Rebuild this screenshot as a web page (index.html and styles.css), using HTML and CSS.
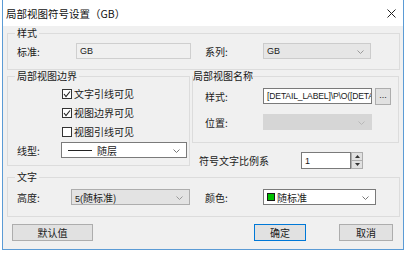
FILE: index.html
```html
<!DOCTYPE html>
<html lang="zh-CN">
<head>
  <meta charset="UTF-8" />
  <title>局部视图符号设置（GB）</title>
  <link rel="stylesheet" href="styles.css">
</head>
<body>
  <div class="dialog">
    <div class="titlebar">
      <span class="title">局部视图符号设置（GB）</span>
      <svg class="close" width="9" height="9" viewBox="0 0 9 9">
        <path d="M0.5 0.5 L8.5 8.5 M8.5 0.5 L0.5 8.5" stroke="#222" stroke-width="1" fill="none"/>
      </svg>
    </div>

    <div class="body">
      <fieldset class="group group-style">
        <legend>样式</legend>
        <div class="row">
          <span class="lbl w59">标准:</span>
          <div class="field ro w115"><span class="latin">GB</span></div>
          <span class="lbl w58 gap14">系列:</span>
          <div class="combo dis w108">
            <span class="latin">GB</span>
            <svg class="chev" width="7" height="4"><polyline points="0.5,0.5 3.5,3.5 6.5,0.5" fill="none" stroke="#9a9a9a"/></svg>
          </div>
        </div>
      </fieldset>

      <div class="mid">
        <fieldset class="group group-border">
          <legend>局部视图边界</legend>
          <div class="check first">
            <span class="box"><svg width="8" height="8"><polyline points="1,4 3,6.5 7,1.5" fill="none" stroke="#222" stroke-width="1.1"/></svg></span>文字引线可见
          </div>
          <div class="check">
            <span class="box"><svg width="8" height="8"><polyline points="1,4 3,6.5 7,1.5" fill="none" stroke="#222" stroke-width="1.1"/></svg></span>视图边界可见
          </div>
          <div class="check">
            <span class="box"></span>视图引线可见
          </div>
          <div class="row linetype">
            <span class="lbl w44">线型:</span>
            <div class="combo w126">
              <span class="dash"></span><span>随层</span>
              <svg class="chev" width="7" height="4"><polyline points="0.5,0.5 3.5,3.5 6.5,0.5" fill="none" stroke="#777"/></svg>
            </div>
          </div>
        </fieldset>

        <div class="right-col">
          <fieldset class="group group-name">
            <legend>局部视图名称</legend>
            <div class="row r17 name-style">
              <span class="lbl w58">样式:</span>
              <div class="field w109"><span class="latin narrow">[DETAIL_LABEL]\P\O([DETA</span></div>
              <div class="btn dots">...</div>
            </div>
            <div class="row name-pos">
              <span class="lbl w58">位置:</span>
              <div class="combo off w109">
                <svg class="chev" width="7" height="4"><polyline points="0.5,0.5 3.5,3.5 6.5,0.5" fill="none" stroke="#b8b8b8"/></svg>
              </div>
            </div>
          </fieldset>
          <div class="row r17 scale">
            <span class="lbl w102">符号文字比例系</span>
            <div class="field w50"><span class="latin">1</span></div>
            <div class="spin">
              <div class="spin-btn"><svg width="5" height="3"><polygon points="0,3 2.5,0 5,3" fill="#333"/></svg></div>
              <div class="spin-btn"><svg width="5" height="3"><polygon points="0,0 2.5,3 5,0" fill="#333"/></svg></div>
            </div>
          </div>
        </div>
      </div>

      <fieldset class="group group-text">
        <legend>文字</legend>
        <div class="row">
          <span class="lbl w54">高度:</span>
          <div class="combo dis2 w119">
            <span><span class="latin">5(</span>随标准)</span>
            <svg class="chev" width="7" height="4"><polyline points="0.5,0.5 3.5,3.5 6.5,0.5" fill="none" stroke="#999"/></svg>
          </div>
          <span class="lbl w58 gap15">颜色:</span>
          <div class="combo w113">
            <span class="swatch"></span><span>随标准</span>
            <svg class="chev" width="7" height="4"><polyline points="0.5,0.5 3.5,3.5 6.5,0.5" fill="none" stroke="#777"/></svg>
          </div>
        </div>
      </fieldset>

      <div class="buttons">
        <div class="btn w81">默认值</div>
        <div class="btn w52 ok">确定</div>
        <div class="btn w54 cancel">取消</div>
      </div>
    </div>
  </div>
</body>
</html>
```

FILE: styles.css
```css
body {
  margin: 0;
  background: #fff;
  font-family: "Noto Sans CJK SC", "Liberation Sans", sans-serif;
  font-size: 10px;
  color: #1a1a1a;
}

.dialog {
  box-sizing: border-box;
  margin-left: 2px;
  width: 402px;
  height: 250px;
  border: 1px solid #5b9bd5;
  border-top: none;
}

.titlebar {
  height: 26px;
  display: flex;
  align-items: center;
  justify-content: space-between;
  padding: 0 7px 0 3px;
  background: #fff;
}

.title {
  font-size: 10.5px;
  color: #111;
}

.body {
  height: 223px;
  box-sizing: border-box;
  padding: 1px 3px 0 4px;
  background: #f0f0f0;
}

.group {
  margin: 0;
  border: 1px solid #dcdcdc;
  min-width: 0;
  box-sizing: border-box;
}

.group legend {
  line-height: 12px;
  padding: 0 2px;
  margin-left: -2px;
}

.group-style {
  padding: 0 4px 10px 9px;
}

.group-style .row {
  margin-top: 4px;
}

.row {
  display: flex;
  align-items: center;
  height: 16px;
}

.r17 {
  height: 17px;
  align-items: flex-start;
}

.r17 .lbl {
  line-height: 17px;
}

.lbl {
  flex: none;
  white-space: nowrap;
}

.latin {
  font-family: "Liberation Sans", sans-serif;
  font-size: 9px;
}

.latin.narrow {
  font-size: 8.6px;
  letter-spacing: -0.15px;
}

.w44 { width: 44px; }
.w50 { width: 50px; }
.w52 { width: 52px; }
.w54 { width: 54px; }
.w58 { width: 58px; }
.w59 { width: 59px; }
.w81 { width: 81px; }
.w102 { width: 102px; }
.w108 { width: 108px; }
.w109 { width: 109px; }
.w113 { width: 113px; }
.w115 { width: 115px; }
.w119 { width: 119px; }
.w126 { width: 126px; }
.gap14 { margin-left: 14px; }
.gap15 { margin-left: 15px; }

.field,
.combo {
  flex: none;
  box-sizing: border-box;
  height: 16px;
  border: 1px solid #7a7a7a;
  background: #fff;
  display: flex;
  align-items: center;
  padding-left: 3px;
  overflow: hidden;
  white-space: nowrap;
}

.field.ro {
  background: #f0f0f0;
  border-color: #cfcfcf;
}

.combo {
  position: relative;
  padding-right: 16px;
}

.combo .chev {
  position: absolute;
  right: 6px;
  top: 6px;
}

.combo.dis {
  background: #e6e6e6;
  border-color: #cccccc;
}

.combo.dis2 {
  background: #e3e3e3;
  border-color: #adadad;
}

.combo.off {
  background: #d6d6d6;
  border-color: #d6d6d6;
}

.mid {
  display: flex;
  align-items: flex-start;
}

.group-border {
  width: 183px;
  padding: 0 2px 7px 9px;
}

.check {
  display: flex;
  align-items: center;
  height: 19px;
  margin-left: 45px;
}

.check.first {
  margin-top: 2px;
}

.box {
  box-sizing: border-box;
  width: 10px;
  height: 10px;
  border: 1px solid #333;
  background: #fff;
  margin-right: 2px;
  display: flex;
  align-items: center;
  justify-content: center;
}

.linetype {
  margin-top: 1px;
}

.dash {
  width: 24px;
  border-top: 1px solid #222;
  margin: 0 5px 0 3px;
}

.right-col {
  margin-left: 2px;
  width: 207px;
}

.group-name {
  padding: 0 0 12px 0;
}

.group-name legend {
  padding: 0;
  margin-left: 0;
}

.group-name .row {
  margin-left: 12px;
}

.name-style {
  margin-top: 6px;
}

.name-pos {
  margin-top: 9px;
}

.btn {
  flex: none;
  box-sizing: border-box;
  height: 17px;
  border: 1px solid #adadad;
  background: #e1e1e1;
  display: flex;
  align-items: center;
  justify-content: center;
}

.dots {
  width: 16px;
  margin-left: 3px;
  font-family: "Liberation Sans", sans-serif;
  font-size: 9px;
  padding-bottom: 3px;
}

.scale {
  margin-top: 9px;
  margin-left: 7px;
}

.scale .field {
  height: 17px;
}

.spin {
  width: 12px;
  height: 17px;
  display: flex;
  flex-direction: column;
}

.spin-btn {
  flex: 1;
  box-sizing: border-box;
  border: 1px solid #adadad;
  background: #e1e1e1;
  display: flex;
  align-items: center;
  justify-content: center;
}

.spin-btn + .spin-btn {
  border-top: none;
}

.group-text {
  margin-top: 2px;
  padding: 0 4px 11px 9px;
}

.group-text .row {
  margin-top: 6px;
}

.swatch {
  width: 6px;
  height: 6px;
  background: #00c000;
  border: 1px solid #1a1a1a;
  margin-right: 2px;
}

.buttons {
  display: flex;
  margin-top: 7px;
  padding-left: 5px;
}

.ok {
  margin-left: 161px;
  border-color: #0078d7;
}

.cancel {
  margin-left: 33px;
}
```
